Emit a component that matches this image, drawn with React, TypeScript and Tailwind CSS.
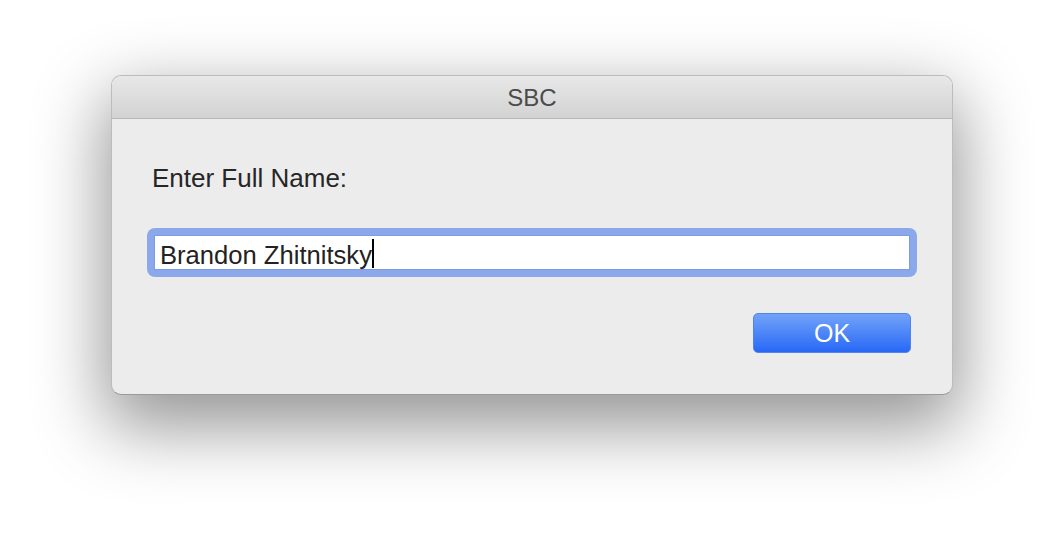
export default function App() {
  return (
    <div className="w-[1064px] h-[542px] bg-white pt-[75px] pl-[111px] font-['Liberation_Sans',Arial,sans-serif] overflow-hidden">
      <div className="w-[842px] h-[320px] rounded-[10px] border border-[#bcbcbc] border-b-[#9a9a9a] bg-[#ececec] overflow-hidden flex flex-col shadow-[0_26px_70px_6px_rgba(0,0,0,0.42)]">
        {/* title bar */}
        <div className="h-[43px] shrink-0 flex items-center justify-center pt-[2px] border-b border-[#b7b7b7] bg-gradient-to-b from-[#e8e8e8] to-[#d3d3d3]">
          <span className="text-[24px] leading-[30px] text-[#4b4b4b]">SBC</span>
        </div>

        <div className="flex flex-col px-[35px] pt-[44px]">
          <div className="ml-[5px] text-[26px] leading-[30px] text-[#262626]">Enter Full Name:</div>

          <div className="mt-[35px] rounded-[8px] bg-[#8aa8ea] p-[7px]">
            <div className="h-[35px] bg-white border border-[#7d9ce3] flex items-start pl-[5px]">
              <span className="pt-[3px] text-[25.6px] leading-[32px] text-[#222]">Brandon Zhitnitsky</span>
              <span className="mt-[3px] w-[2px] h-[29px] bg-black" />
            </div>
          </div>

          <div className="mt-[36px] self-end mr-[6px] w-[158px] h-[40px] rounded-[5px] bg-gradient-to-b from-[#72a2f8] to-[#2767f5] border border-[#4f84ee] flex items-center justify-center">
            <span className="text-[25px] leading-[38px] text-white">OK</span>
          </div>
        </div>
      </div>
    </div>
  );
}
